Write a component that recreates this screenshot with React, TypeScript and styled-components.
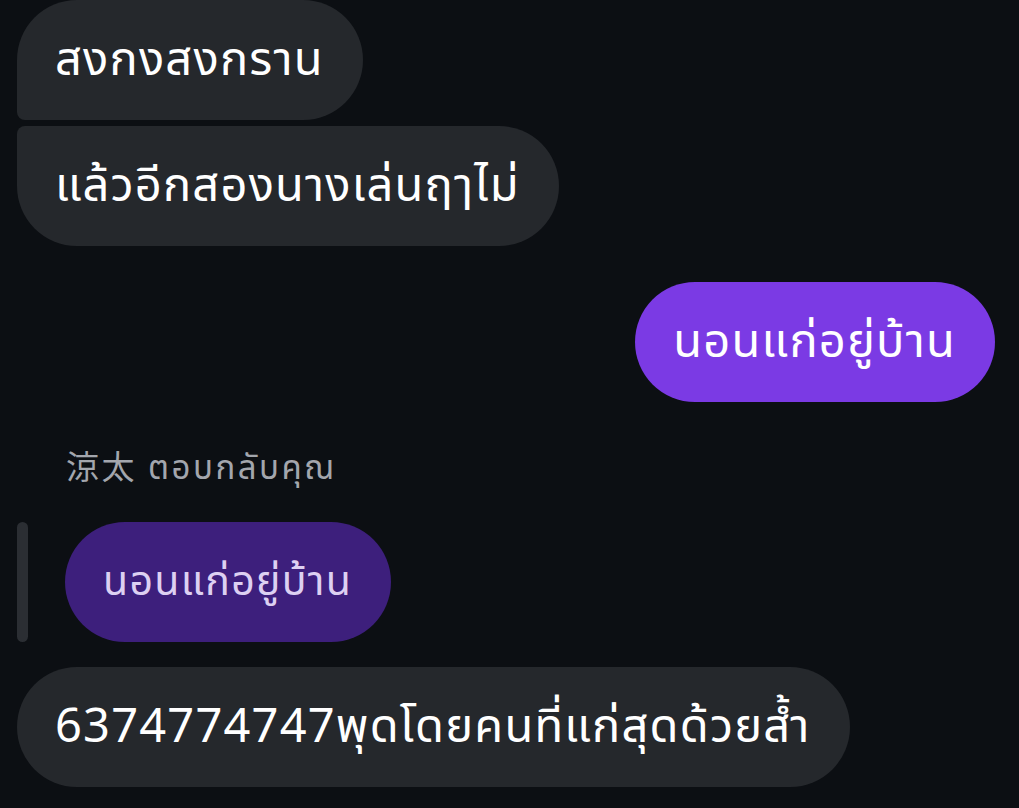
import React from "react";
import styled, { createGlobalStyle } from "styled-components";

const Global = createGlobalStyle`
  html, body {
    margin: 0;
    padding: 0;
    background: #0c0f13;
  }
  body {
    font-family: "Noto Sans", "Noto Sans Thai", "Liberation Sans", sans-serif;
    overflow: hidden;
  }
`;

const Thread = styled.div`
  display: flex;
  flex-direction: column;
  padding: 0 24px 0 17px;
  width: 1019px;
  height: 808px;
  box-sizing: border-box;
  background: #0c0f13;
`;

const Row = styled.div<{ $mine?: boolean; $gap?: number }>`
  display: flex;
  justify-content: ${(p) => (p.$mine ? "flex-end" : "flex-start")};
  margin-top: ${(p) => p.$gap ?? 0}px;
`;

type Shape = "first" | "last" | "single";

const radius = (s: Shape) =>
  s === "first"
    ? "60px 60px 60px 8px"
    : s === "last"
    ? "8px 60px 60px 60px"
    : "60px";

const Bubble = styled.div<{ $mine?: boolean; $shape?: Shape }>`
  display: inline-flex;
  align-items: center;
  box-sizing: border-box;
  height: 120px;
  padding: 0 39px 0 38px;
  border-radius: ${(p) => radius(p.$shape ?? "single")};
  background: ${(p) => (p.$mine ? "#7b3ae4" : "#25282c")};
  color: #ffffff;
  font-size: 47px;
  letter-spacing: 1.2px;
  white-space: nowrap;
`;

const ReplyLabel = styled.div`
  margin-top: 44px;
  padding-left: 49px;
  font-size: 33px;
  letter-spacing: 2.5px;
  line-height: 42px;
  color: #a3a6ad;
  font-family: "Noto Sans", "Noto Sans Thai", "Noto Sans CJK JP", sans-serif;
`;

const Quote = styled.div`
  display: flex;
  align-items: stretch;
  gap: 37px;
  margin-top: 34px;
`;

const QuoteBar = styled.div`
  width: 11px;
  border-radius: 6px;
  background: #2b2e33;
`;

const QuoteBubble = styled.div`
  display: inline-flex;
  align-items: center;
  box-sizing: border-box;
  height: 120px;
  padding: 0 39px 0 38px;
  border-radius: 60px;
  background: #3d1f7c;
  color: #ddd0f2;
  font-size: 41px;
  letter-spacing: 1.3px;
  white-space: nowrap;
`;

export default function App() {
  return (
    <>
      <Global />
      <Thread>
        <Row>
          <Bubble $shape="first">สงกงสงกราน</Bubble>
        </Row>
        <Row $gap={6}>
          <Bubble $shape="last">แล้วอีกสองนางเล่นฤๅไม่</Bubble>
        </Row>
        <Row $mine $gap={36}>
          <Bubble $mine>นอนแก่อยู่บ้าน</Bubble>
        </Row>
        <ReplyLabel>涼太 ตอบกลับคุณ</ReplyLabel>
        <Quote>
          <QuoteBar />
          <QuoteBubble>นอนแก่อยู่บ้าน</QuoteBubble>
        </Quote>
        <Row $gap={25}>
          <Bubble>6374774747พุดโดยคนที่แก่สุดด้วยส้ำ</Bubble>
        </Row>
      </Thread>
    </>
  );
}
